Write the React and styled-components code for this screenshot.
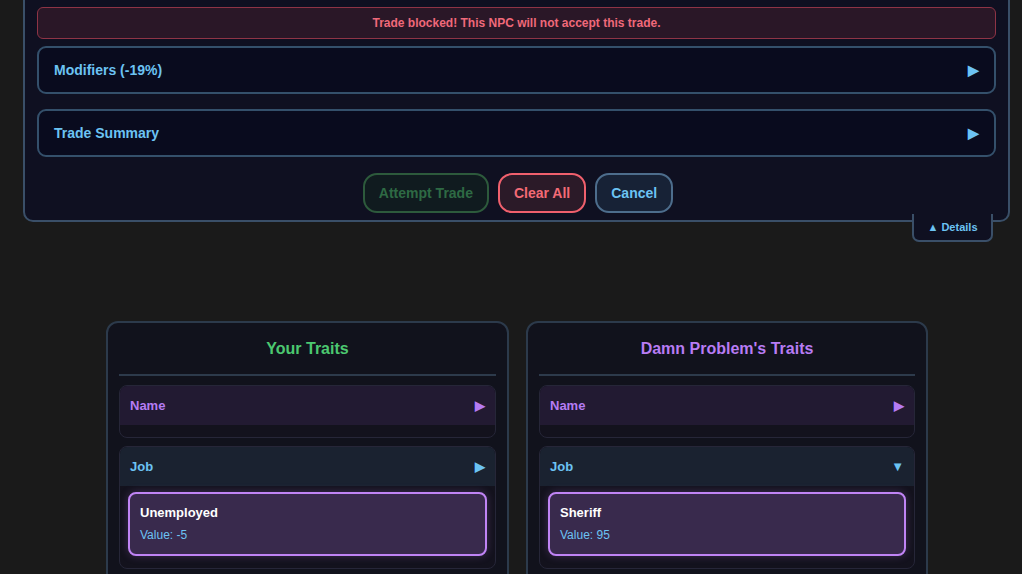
import React from "react"
import styled, { createGlobalStyle } from "styled-components"

const GlobalStyle = createGlobalStyle`
  *, *::before, *::after {
    box-sizing: border-box;
  }
  html, body {
    margin: 0;
    padding: 0;
    background: #1a1a1a;
    font-family: "Liberation Sans", Arial, sans-serif;
    overflow: hidden;
  }
`

const Page = styled.div`
  width: 1022px;
  height: 574px;
  overflow: hidden;
`

const TradePanel = styled.div`
  position: relative;
  margin: -40px 12px 0 23px;
  padding: 45px 12px 7px;
  background: #0f1021;
  border: 2px solid #3a4f68;
  border-radius: 10px;
  display: flex;
  flex-direction: column;
`

const Banner = styled.div`
  height: 32px;
  display: flex;
  align-items: center;
  justify-content: center;
  background: #2a1727;
  border: 1px solid #8e3446;
  border-radius: 6px;
  color: #f0697a;
  font-size: 12px;
  font-weight: bold;
  margin-bottom: 7px;
`

const Collapsible = styled.div`
  height: 48px;
  display: flex;
  align-items: center;
  justify-content: space-between;
  padding: 0 15px;
  background: #090b1e;
  border: 2px solid #34506b;
  border-radius: 9px;
  color: #6cc3f3;
  font-size: 14px;
  font-weight: bold;
  margin-bottom: 15px;
`

const Arrow = styled.span`
  color: ${(p) => p.$color || "#6cc3f3"};
  font-size: ${(p) => p.$size || 13}px;
  line-height: 1;
`

const ButtonRow = styled.div`
  display: flex;
  justify-content: center;
  gap: 9px;
  margin-top: 1px;
  padding-left: 3px;
`

const tones = {
  green: { border: "#2d5a3c", bg: "#101b1f", text: "#2e6a44" },
  red: { border: "#f0606d", bg: "#2b1a28", text: "#f36a76" },
  blue: { border: "#4d6d8c", bg: "#172236", text: "#6cc3f3" },
}

const ActionButton = styled.button`
  height: 40px;
  padding: 0 14px;
  border-radius: 14px;
  border: 2px solid ${(p) => tones[p.$tone].border};
  background: ${(p) => tones[p.$tone].bg};
  color: ${(p) => tones[p.$tone].text};
  font-family: inherit;
  font-size: 14px;
  font-weight: bold;
  cursor: ${(p) => (p.disabled ? "default" : "pointer")};
`

const DetailsTab = styled.div`
  position: absolute;
  right: 15px;
  bottom: -22px;
  width: 81px;
  height: 28px;
  display: flex;
  align-items: center;
  justify-content: center;
  background: #0f1021;
  border: 2px solid #3a4f68;
  border-top: none;
  border-radius: 0 0 7px 7px;
  color: #6cc3f3;
  font-size: 11px;
  font-weight: bold;
`

const TraitColumns = styled.div`
  display: grid;
  grid-template-columns: 403px 402px;
  gap: 17px;
  margin: 99px 0 0 106px;
`

const TraitCard = styled.div`
  background: #11121c;
  border: 2px solid #2c3a4b;
  border-radius: 12px;
  padding: 16px 11px 12px;
  display: flex;
  flex-direction: column;
`

const CardTitle = styled.h2`
  margin: 0 0 9px;
  line-height: 18px;
  text-align: center;
  font-size: 16px;
  font-weight: bold;
  color: ${(p) => p.$color};
  padding-top: 1px;
  padding-bottom: 16px;
  border-bottom: 2px solid #2d3a4b;
`

const Section = styled.div`
  border: 1px solid #262638;
  border-radius: 8px;
  overflow: hidden;
  margin-bottom: 8px;
  background: #13121d;
`

const SectionHeader = styled.div`
  height: 39px;
  display: flex;
  align-items: center;
  justify-content: space-between;
  padding: 0 10px;
  background: ${(p) => p.$bg};
  color: ${(p) => p.$color};
  font-size: 13px;
  font-weight: bold;
`

const SectionBody = styled.div`
  padding: 6px 8px;
`

const TraitItem = styled.div`
  background: #392a4d;
  border: 2px solid #c084f5;
  border-radius: 8px;
  padding: 11px 10px 12px;
  margin-bottom: 6px;
  box-shadow: 0 0 8px rgba(192, 132, 245, 0.25);
`

const TraitName = styled.div`
  color: #ffffff;
  font-size: 13px;
  font-weight: bold;
  line-height: 15px;
  margin-bottom: 8px;
`

const TraitValue = styled.div`
  color: #6cc3f3;
  font-size: 12px;
  line-height: 14px;
`

function TraitGroup({ title, titleColor, job, value, jobOpen }) {
  return (
    <TraitCard>
      <CardTitle $color={titleColor}>{title}</CardTitle>
      <Section>
        <SectionHeader $bg="#221a32" $color="#b57cf3">
          Name
          <Arrow $color="#b57cf3">▶</Arrow>
        </SectionHeader>
        <SectionBody />
      </Section>
      <Section>
        <SectionHeader $bg="#1a2230" $color="#6cc3f3">
          Job
          <Arrow>{jobOpen ? "▼" : "▶"}</Arrow>
        </SectionHeader>
        <SectionBody>
          <TraitItem>
            <TraitName>{job}</TraitName>
            <TraitValue>Value: {value}</TraitValue>
          </TraitItem>
        </SectionBody>
      </Section>
    </TraitCard>
  )
}

export default function App() {
  return (
    <Page>
      <GlobalStyle />
      <TradePanel>
        <Banner>Trade blocked! This NPC will not accept this trade.</Banner>
        <Collapsible>
          Modifiers (-19%)
          <Arrow $size={14}>▶</Arrow>
        </Collapsible>
        <Collapsible>
          Trade Summary
          <Arrow $size={14}>▶</Arrow>
        </Collapsible>
        <ButtonRow>
          <ActionButton $tone="green" disabled>
            Attempt Trade
          </ActionButton>
          <ActionButton $tone="red">Clear All</ActionButton>
          <ActionButton $tone="blue">Cancel</ActionButton>
        </ButtonRow>
        <DetailsTab>▲ Details</DetailsTab>
      </TradePanel>
      <TraitColumns>
        <TraitGroup
          title="Your Traits"
          titleColor="#4cc870"
          job="Unemployed"
          value="-5"
        />
        <TraitGroup
          title="Damn Problem's Traits"
          titleColor="#b87cf4"
          job="Sheriff"
          value="95"
          jobOpen
        />
      </TraitColumns>
    </Page>
  )
}
